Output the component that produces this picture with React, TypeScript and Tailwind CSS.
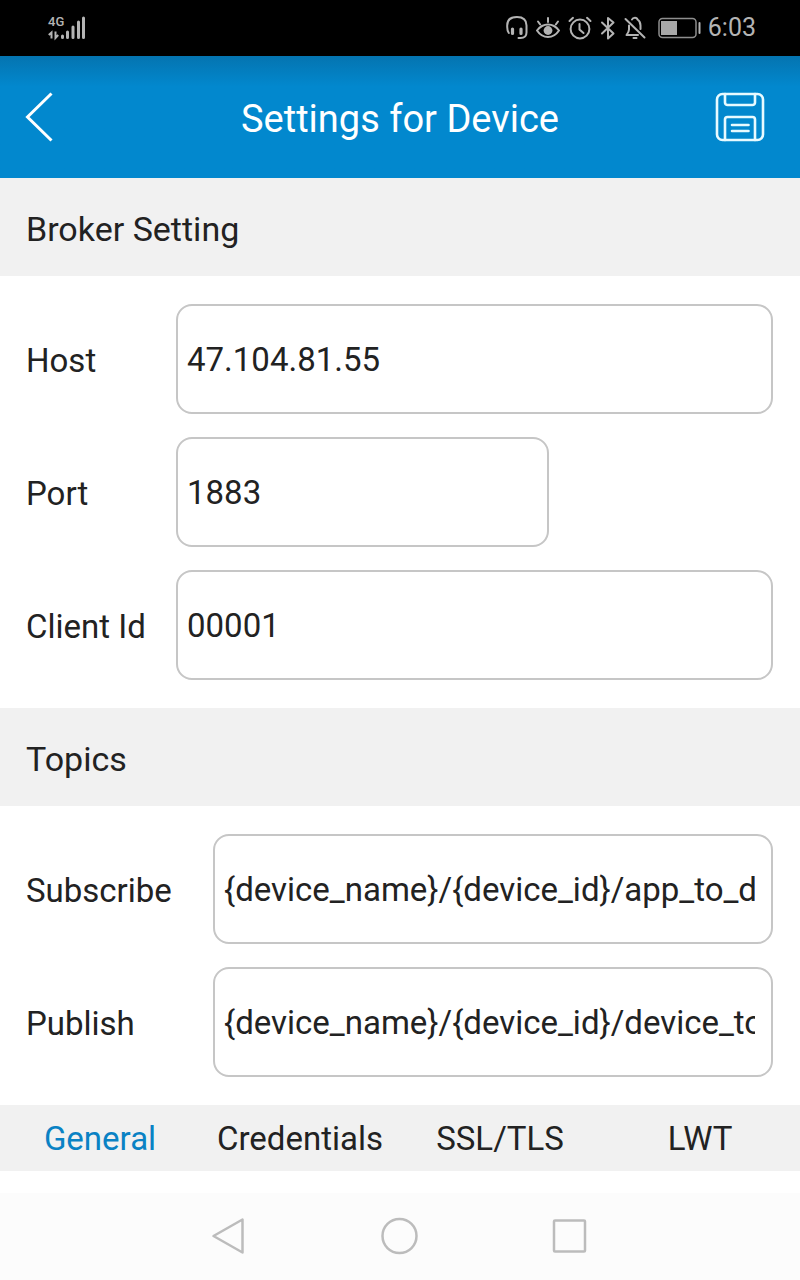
import React, { useState } from 'react';
import clsx from 'clsx';

const TABS = ['General', 'Credentials', 'SSL/TLS', 'LWT'];

function SignalIcon() {
  return (
    <svg width="38" height="26" viewBox="0 0 38 26" fill="none" stroke="#b4b4b4">
      <path d="M3.500 23.500V17.500L0.800 20M7.500 16.500v6.500L10.200 20" strokeWidth="2" />
      <path d="M14.500 21v1.500M19.500 17v5.500M25 12v10.500M30.500 7v15.500M35.500 3v19.500" strokeWidth="3" strokeLinecap="round" />
    </svg>
  );
}

function HeadsetIcon() {
  return (
    <svg width="22" height="26" viewBox="0 0 22 26" fill="none" stroke="#b4b4b4" strokeWidth="2" strokeLinecap="round">
      <path d="M2.800 18C1.600 16.500 1.200 14.500 1.200 12V10.500C1.200 5 5 2 11 2S20.500 5 20.500 10.500V17.500C20.500 21.500 18 23 14.500 23H12.500" />
      <path d="M6.500 14v4.500M15 14v4.500" strokeWidth="3.200" />
    </svg>
  );
}

function EyeIcon() {
  return (
    <svg width="24" height="26" viewBox="0 0 24 26" fill="none" stroke="#b4b4b4" strokeWidth="2" strokeLinecap="round">
      <path d="M1 15.500C4 11.500 7.500 9.500 12 9.500S20 11.500 23 15.500C20 20 16.500 22 12 22S4 20 1 15.500Z" />
      <circle cx="12" cy="15.500" r="4.400" fill="#b4b4b4" stroke="none" />
      <path d="M12 3v4M2 6.500l2.200 3M22 6.500l-2.200 3" />
    </svg>
  );
}

function AlarmIcon() {
  return (
    <svg width="24" height="26" viewBox="0 0 24 26" fill="none" stroke="#b4b4b4" strokeWidth="2" strokeLinecap="round">
      <circle cx="12" cy="14" r="9.400" />
      <path d="M1.500 6L5 2.800M22.500 6L19 2.800M11.500 9v5.500l4 3.500" />
    </svg>
  );
}

function BluetoothIcon() {
  return (
    <svg width="16" height="26" viewBox="0 0 16 26" fill="none" stroke="#b4b4b4" strokeWidth="2" strokeLinejoin="round" strokeLinecap="round">
      <path d="M2 7.500l11.500 11L8 23.500V3l5.500 4.500L2 18.500" />
    </svg>
  );
}

function MutedBellIcon() {
  return (
    <svg width="22" height="26" viewBox="0 0 22 26" fill="none" stroke="#b4b4b4" strokeWidth="2" strokeLinecap="round" strokeLinejoin="round">
      <path d="M1.500 4l19 18.500" />
      <path d="M8 4.500C9 2 13 2 13.500 4.500C16 6 16.500 8 16.500 10.500V14M5 10.500V14.500C5 16.500 4 18 2.500 20H14" />
      <path d="M9.500 23h3" />
    </svg>
  );
}

function BatteryIcon() {
  return (
    <svg width="44" height="22" viewBox="0 0 44 22" fill="none">
      <rect x="1" y="1.500" width="37" height="19" rx="3.500" stroke="#8e8e8e" strokeWidth="1.500" />
      <rect x="3" y="4" width="16" height="14" fill="#a8a8a8" />
      <path d="M41.500 6v10" stroke="#b4b4b4" strokeWidth="2" strokeLinecap="round" />
    </svg>
  );
}

function SaveIcon() {
  return (
    <svg width="50" height="50" viewBox="0 0 50 50" fill="none" stroke="#e8faff" strokeWidth="2.600" strokeLinecap="round">
      <rect x="2" y="2" width="46" height="46" rx="5.500" />
      <path d="M10 2v8.500a2.500 2.500 0 0 0 2.500 2.500h25a2.500 2.500 0 0 0 2.500-2.500V2" />
      <path d="M10 48V27.500a2.500 2.500 0 0 1 2.500-2.500h25a2.500 2.500 0 0 1 2.500 2.500V48" />
      <path d="M17 33h16.500M17 39h16.500" />
    </svg>
  );
}

function StatusBar() {
  return (
    <div className="flex h-14 items-center justify-between bg-black pl-12 pr-11 text-[#b4b4b4]">
      <div className="relative">
        <SignalIcon />
        <span className="absolute left-0 top-0 text-[13px] font-medium leading-[14px]">4G</span>
      </div>
      <div className="flex items-center gap-2">
        <HeadsetIcon />
        <EyeIcon />
        <AlarmIcon />
        <BluetoothIcon />
        <MutedBellIcon />
        <div className="ml-1 flex items-center gap-1.5">
          <BatteryIcon />
          <span className="text-[25px] leading-8">6:03</span>
        </div>
      </div>
    </div>
  );
}

function SectionTitle({ children }: { children: React.ReactNode }) {
  return <h2 className="flex h-[98px] items-center bg-[#f1f1f1] px-[26px] pt-1 text-[34px]">{children}</h2>;
}

interface FieldProps {
  id: string;
  label: string;
  defaultValue: string;
  labelClass: string;
  inputClass?: string;
}

function Field({ id, label, defaultValue, labelClass, inputClass = 'flex-1' }: FieldProps) {
  return (
    <div className="flex items-center">
      <label htmlFor={id} className={clsx('shrink-0 pt-1', labelClass)}>
        {label}
      </label>
      <input
        id={id}
        type="text"
        defaultValue={defaultValue}
        className={clsx(
          'h-[110px] min-w-0 rounded-2xl border-2 border-[#c6c6c6] bg-white pl-[9px] pr-4 outline-none focus:border-[#0288ce]',
          inputClass
        )}
      />
    </div>
  );
}

export default function App() {
  const [activeTab, setActiveTab] = useState('General');

  return (
    <div className="flex min-h-screen flex-col bg-white font-['Roboto',sans-serif] text-[33px] leading-10 text-[#222222]">
      <StatusBar />

      {/* Header */}
      <header className="flex h-[122px] items-center justify-between bg-[#0288ce] bg-linear-to-b from-[#0474b0] to-[#0288ce] to-25% pl-6 pr-[35px] text-white">
        <button type="button" aria-label="Back" className="w-[61px]">
          <svg width="30" height="50" viewBox="0 0 30 50" fill="none" stroke="white" strokeWidth="3">
            <path d="M27.500 1.500L3.500 25l24 23.500" />
          </svg>
        </button>
        <h1 className="pt-1 text-[38px]">Settings for Device</h1>
        <button type="button" aria-label="Save">
          <SaveIcon />
        </button>
      </header>

      <main>
        <SectionTitle>Broker Setting</SectionTitle>
        <div className="flex flex-col gap-[23px] pl-[26px] pr-[27px] py-7">
          <Field id="host" label="Host" defaultValue="47.104.81.55" labelClass="w-[150px]" />
          <Field id="port" label="Port" defaultValue="1883" labelClass="w-[150px]" inputClass="w-[373px]" />
          <Field id="client-id" label="Client Id" defaultValue="00001" labelClass="w-[150px]" />
        </div>

        <SectionTitle>Topics</SectionTitle>
        <div className="flex flex-col gap-[23px] pl-[26px] pr-[27px] py-7">
          <Field
            id="subscribe"
            label="Subscribe"
            defaultValue="{device_name}/{device_id}/app_to_device"
            labelClass="w-[187px]"
          />
          <Field
            id="publish"
            label="Publish"
            defaultValue="{device_name}/{device_id}/device_to_app"
            labelClass="w-[187px]"
          />
        </div>

        {/* Tabs */}
        <div role="tablist" className="grid h-[66px] grid-cols-4 bg-[#f1f1f1]">
          {TABS.map((tab) => (
            <button
              key={tab}
              type="button"
              role="tab"
              aria-selected={activeTab === tab}
              onClick={() => setActiveTab(tab)}
              className={clsx('pt-0.5', activeTab === tab && 'text-[#0a82c4]')}
            >
              {tab}
            </button>
          ))}
        </div>
      </main>

      {/* System navigation */}
      <nav className="mt-auto flex h-[87px] items-center justify-center gap-[132px] bg-[#fcfcfc] pb-0.5">
        <button type="button" aria-label="System back">
          <svg width="38" height="38" viewBox="0 0 38 38" fill="none" stroke="#bcbcbc" strokeWidth="2.500" strokeLinejoin="round">
            <path d="M2.500 19L31.500 2.500v33Z" />
          </svg>
        </button>
        <button type="button" aria-label="Home">
          <svg width="38" height="38" viewBox="0 0 38 38" fill="none" stroke="#bcbcbc" strokeWidth="2.500">
            <circle cx="18.500" cy="19" r="17" />
          </svg>
        </button>
        <button type="button" aria-label="Recent apps">
          <svg width="38" height="38" viewBox="0 0 38 38" fill="none" stroke="#bcbcbc" strokeWidth="2.500">
            <rect x="3" y="3.500" width="31" height="31" rx="1" />
          </svg>
        </button>
      </nav>
    </div>
  );
}
